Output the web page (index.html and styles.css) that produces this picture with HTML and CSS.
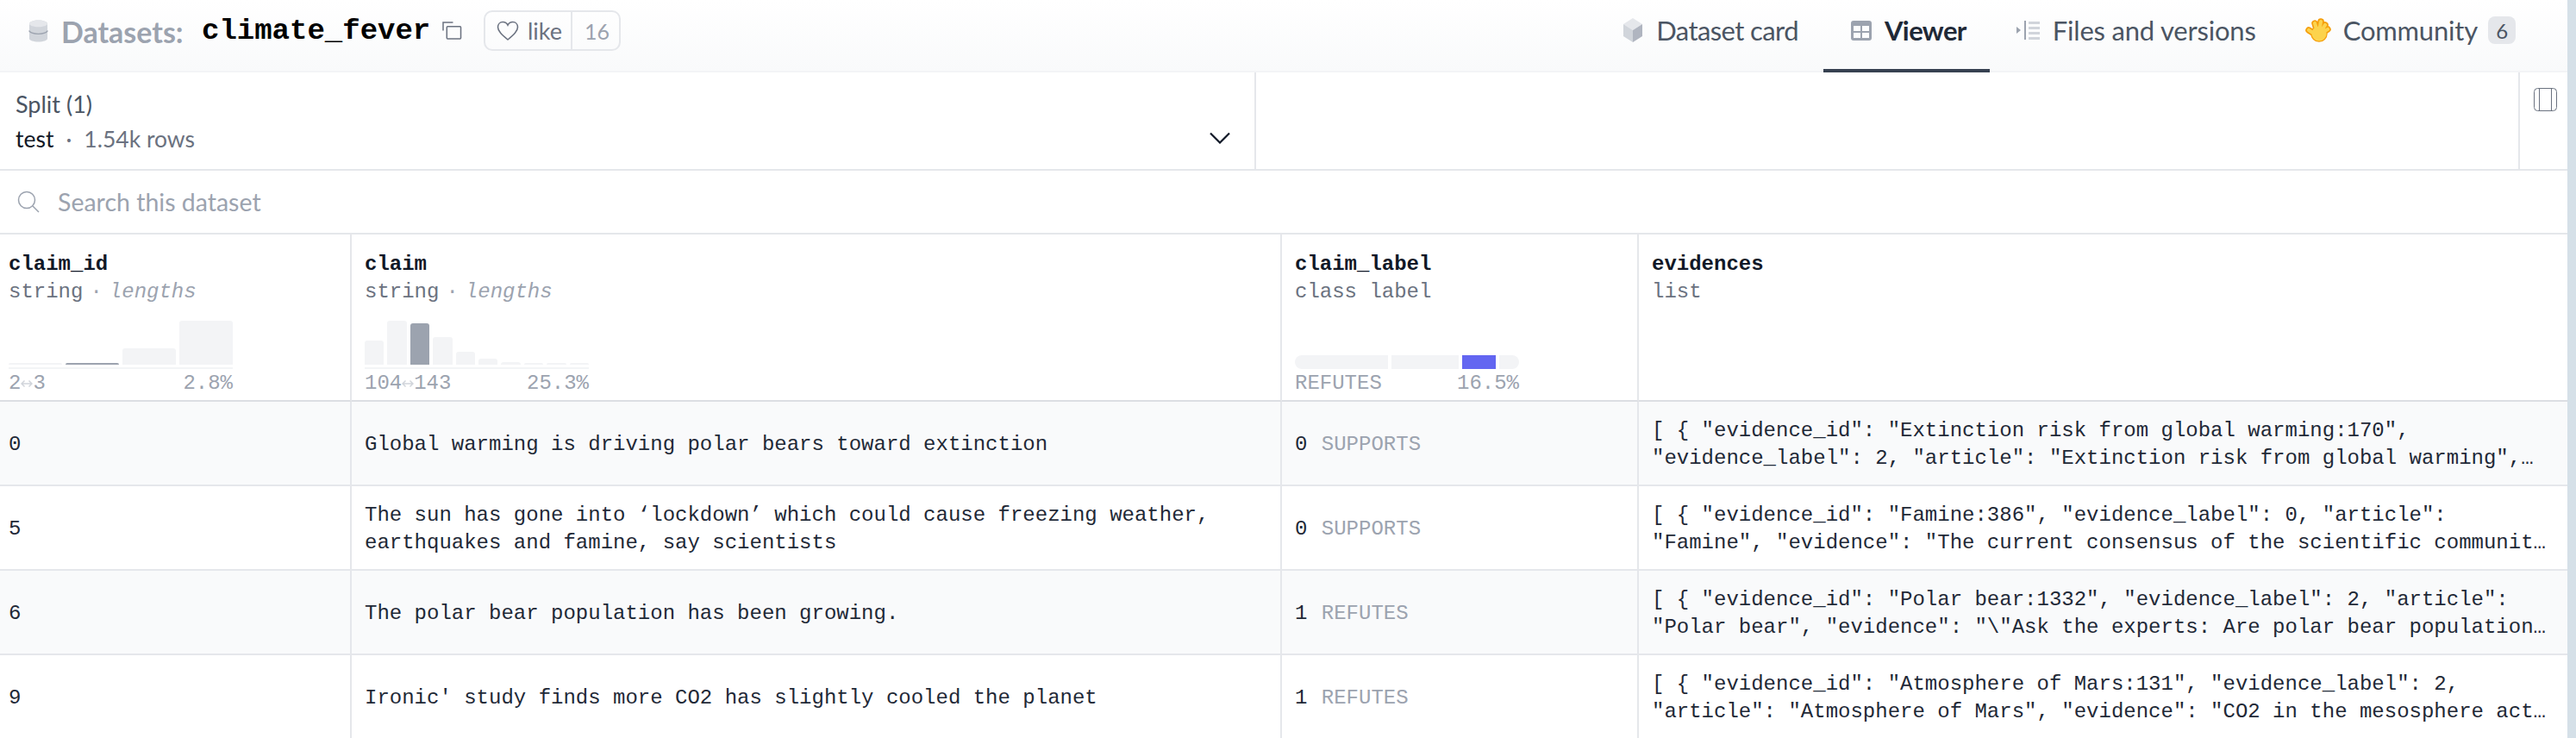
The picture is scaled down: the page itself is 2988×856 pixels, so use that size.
FILE: index.html
```html
<!DOCTYPE html>
<html lang="en">
<head>
    <meta charset="UTF-8">
    <title>climate_fever</title>
    <link rel="stylesheet" href="styles.css">
</head>
<body>
<div class="page">
    <div class="main">
        <header class="top-bar">
            <div class="title">
                <svg class="db-icon" viewBox="0 0 24 26">
                    <path d="M1 4c0-2 5-4 11-4s11 2 11 4v18c0 2-5 4-11 4S1 24 1 22z" fill="#d1d5db"/>
                    <path d="M1 4c0 2 5 4 11 4s11-2 11-4-5-4-11-4S1 2 1 4z" fill="#e5e7eb"/>
                    <path d="M1 12.500c0 2 5 4 11 4s11-2 11-4" fill="none" stroke="#9ca3af" stroke-width="1.500"/>
                </svg>
                <span class="title-label">Datasets:</span>
                <span class="title-name">climate_fever</span>
                <svg class="copy-icon" viewBox="0 0 24 22" fill="none" stroke="#6b7280" stroke-width="1.6">
                    <rect x="5.5" y="6" width="17" height="15" rx="1"/>
                    <path d="M1 11V1h12"/>
                </svg>
                <div class="like-btn">
                    <span class="like-main">
                        <svg class="heart" viewBox="0 0 26 24" fill="none" stroke="#6b7280" stroke-width="1.6">
                            <path d="M13 22C6 16 1.500 12 1.500 7.500 1.500 4 4 1.500 7.200 1.500c2.400 0 4.600 1.300 5.800 3.700 1.200-2.400 3.400-3.700 5.800-3.700 3.200 0 5.700 2.500 5.700 6C24.500 12 20 16 13 22z"/>
                        </svg>
                        like
                    </span>
                    <span class="like-count">16</span>
                </div>
            </div>
            <nav class="tabs">
                <a class="tab tab-card">
                    <svg class="tab-icon" viewBox="0 0 24 28">
                        <path d="M12 0l11 7-11 7L1 7z" fill="#e5e7eb"/>
                        <path d="M1 7l11 7v14L1 21z" fill="#d1d5db"/>
                        <path d="M23 7l-11 7v14l11-7z" fill="#b0b5c0"/>
                    </svg>
                    Dataset card
                </a>
                <a class="tab tab-viewer">
                    <svg class="tab-icon" viewBox="0 0 24 23">
                        <path d="M3 0h18a3 3 0 0 1 3 3v17a3 3 0 0 1-3 3H3a3 3 0 0 1-3-3V3a3 3 0 0 1 3-3zM3 6v6h8V6zm10 0v6h8V6zM3 14v6h8v-6zm10 0v6h8v-6z" fill="#9ca3af" fill-rule="evenodd"/>
                    </svg>
                    Viewer
                </a>
                <a class="tab tab-files">
                    <svg class="tab-icon" viewBox="0 0 27 22">
                        <path d="M0 7l5 4-5 4z" fill="#9ca3af"/>
                        <rect x="9" y="0" width="2" height="22" fill="#9ca3af"/>
                        <rect x="14" y="1" width="13" height="3" fill="#d1d5db"/>
                        <rect x="14" y="7" width="13" height="3" fill="#d1d5db"/>
                        <rect x="14" y="13" width="13" height="3" fill="#d1d5db"/>
                        <rect x="14" y="19" width="13" height="3" fill="#d1d5db"/>
                    </svg>
                    Files and versions
                </a>
                <a class="tab tab-community">
                    <svg class="tab-icon hand" viewBox="0 0 32 28">
                        <g fill="#f59e0b" stroke="#f59e0b" stroke-width="7.500" stroke-linecap="round">
                            <circle cx="17" cy="18" r="6"/>
                            <path d="M15 16L12 6M17 16l2-12M19 16l5-8M20 17l7-4M13 19L5 14"/>
                        </g>
                        <g fill="#fcd34d" stroke="#fcd34d" stroke-width="4.200" stroke-linecap="round">
                            <circle cx="17" cy="18" r="6.500"/>
                            <path d="M15 16L12 6M17 16l2-12M19 16l5-8M20 17l7-4M13 19L5 14"/>
                        </g>
                    </svg>
                    Community
                    <span class="tab-badge">6</span>
                </a>
            </nav>
        </header>

        <div class="split-row">
            <div class="split-select">
                <div class="split-text">
                    <div class="split-title">Split (1)</div>
                    <div class="split-value"><span class="split-name">test</span><span class="split-dot">·</span>1.54k rows</div>
                </div>
                <svg class="chevron" viewBox="0 0 24 14" fill="none" stroke="#111827" stroke-width="2.200">
                    <path d="M1 1.500l11 11 11-11"/>
                </svg>
            </div>
            <div class="split-empty"></div>
            <div class="panel-toggle">
                <svg class="panel-icon" viewBox="0 0 27 27" fill="none" stroke="#6b7280" stroke-width="1">
                    <rect x=".5" y=".5" width="26" height="26" rx="4"/>
                    <path d="M6.500 .5v26M20.500 .5v26"/>
                </svg>
            </div>
        </div>

        <div class="search-row">
            <svg class="search-icon" viewBox="0 0 26 26" fill="none" stroke="#9ca3af" stroke-width="1.500">
                <circle cx="11" cy="11" r="9.500"/>
                <path d="M18 18l7 7"/>
            </svg>
            <span class="search-text">Search this dataset</span>
        </div>

        <table class="data-table">
            <colgroup>
                <col class="col-id">
                <col class="col-claim">
                <col class="col-label">
                <col class="col-evidence">
            </colgroup>
            <thead>
                <tr>
                    <th>
                        <div class="head-cell">
                            <div class="col-name">claim_id</div>
                            <div class="col-type">string<span class="type-dot">·</span><i>lengths</i></div>
                            <div class="hist">
                                <div class="bars">
                                    <span class="bar" style="height: 2px"></span>
                                    <span class="bar bar-on" style="height: 2px"></span>
                                    <span class="bar" style="height: 19px"></span>
                                    <span class="bar" style="height: 51px"></span>
                                </div>
                                <div class="stat">
                                    <span class="range">2<svg class="arrow" viewBox="0 0 14 10"><path d="M1 5h12M4.500 1.500L1 5l3.500 3.500M9.500 1.500L13 5 9.500 8.500"/></svg>3</span>
                                    <span>2.8%</span>
                                </div>
                            </div>
                        </div>
                    </th>
                    <th>
                        <div class="head-cell">
                            <div class="col-name">claim</div>
                            <div class="col-type">string<span class="type-dot">·</span><i>lengths</i></div>
                            <div class="hist">
                                <div class="bars">
                                    <span class="bar" style="height: 28px"></span>
                                    <span class="bar" style="height: 51px"></span>
                                    <span class="bar bar-on" style="height: 48px"></span>
                                    <span class="bar" style="height: 32px"></span>
                                    <span class="bar" style="height: 15px"></span>
                                    <span class="bar" style="height: 7px"></span>
                                    <span class="bar" style="height: 3px"></span>
                                    <span class="bar" style="height: 2px"></span>
                                    <span class="bar" style="height: 2px"></span>
                                    <span class="bar" style="height: 2px"></span>
                                </div>
                                <div class="stat">
                                    <span class="range">104<svg class="arrow" viewBox="0 0 14 10"><path d="M1 5h12M4.500 1.500L1 5l3.500 3.500M9.500 1.500L13 5 9.500 8.500"/></svg>143</span>
                                    <span>25.3%</span>
                                </div>
                            </div>
                        </div>
                    </th>
                    <th>
                        <div class="head-cell">
                            <div class="col-name">claim_label</div>
                            <div class="col-type">class label</div>
                            <div class="hist">
                                <div class="segments">
                                    <span class="seg seg-a"></span>
                                    <span class="seg seg-b"></span>
                                    <span class="seg seg-c"></span>
                                    <span class="seg seg-d"></span>
                                </div>
                                <div class="stat"><span>REFUTES</span><span>16.5%</span></div>
                            </div>
                        </div>
                    </th>
                    <th>
                        <div class="head-cell">
                            <div class="col-name">evidences</div>
                            <div class="col-type">list</div>
                        </div>
                    </th>
                </tr>
            </thead>
            <tbody>
                <tr>
                    <td>0</td>
                    <td>Global warming is driving polar bears toward extinction</td>
                    <td>0 <span class="label-name">SUPPORTS</span></td>
                    <td><div class="clamp">[ { "evidence_id": "Extinction risk from global warming:170", "evidence_label": 2, "article": "Extinction risk from global warming", "evidence": "Recent research" } ]</div></td>
                </tr>
                <tr>
                    <td>5</td>
                    <td>The sun has gone into ‘lockdown’ which could cause freezing weather, earthquakes and famine, say scientists</td>
                    <td>0 <span class="label-name">SUPPORTS</span></td>
                    <td><div class="clamp">[ { "evidence_id": "Famine:386", "evidence_label": 0, "article": "Famine", "evidence": "The current consensus of the scientific community is settled." } ]</div></td>
                </tr>
                <tr>
                    <td>6</td>
                    <td>The polar bear population has been growing.</td>
                    <td>1 <span class="label-name">REFUTES</span></td>
                    <td><div class="clamp">[ { "evidence_id": "Polar bear:1332", "evidence_label": 2, "article": "Polar bear", "evidence": "\"Ask the experts: Are polar bear populations increasing?\"" } ]</div></td>
                </tr>
                <tr>
                    <td>9</td>
                    <td>Ironic' study finds more CO2 has slightly cooled the planet</td>
                    <td>1 <span class="label-name">REFUTES</span></td>
                    <td><div class="clamp">[ { "evidence_id": "Atmosphere of Mars:131", "evidence_label": 2, "article": "Atmosphere of Mars", "evidence": "CO2 in the mesosphere acts as a cooling agent." } ]</div></td>
                </tr>
            </tbody>
        </table>
    </div>
    <div class="edge-strip"></div>
</div>
</body>
</html>
```

FILE: styles.css
```css
* {
    box-sizing: border-box;
}

html, body {
    margin: 0;
    height: 100%;
    overflow: hidden;
    background: white;
}

body {
    font-family: Lato, "Noto Sans", sans-serif;
    color: #111827;
}

.page {
    display: flex;
    height: 856px;
    overflow: hidden;
}

.main {
    flex: 1;
    min-width: 0;
}

.edge-strip {
    width: 10px;
    background: #d5e0e8;
}

/* top bar */
.top-bar {
    display: flex;
    justify-content: space-between;
    height: 84px;
    background: linear-gradient(to bottom, #ffffff, #f9fafb);
    border-bottom: 2px solid #f3f4f6;
}

.title {
    display: flex;
    align-items: center;
    padding-left: 33px;
    height: 72px;
}

.db-icon {
    width: 23px;
    height: 26px;
    margin-right: 15px;
}

.title-label {
    font-size: 34px;
    font-weight: 700;
    color: #9ca3af;
    width: 163px;
}

.title-name {
    font-family: "Liberation Mono", monospace;
    font-size: 34px;
    font-weight: 700;
    color: #000;
    width: 279px;
}

.copy-icon {
    width: 23px;
    height: 21px;
    margin-top: -2px;
    margin-right: 25px;
}

.like-btn {
    display: flex;
    height: 47px;
    margin-top: -1px;
    border: 2px solid #e5e7eb;
    border-radius: 10px;
    font-size: 27px;
    color: #6b7280;
}

.like-main {
    display: flex;
    align-items: center;
    width: 101px;
    padding-left: 13px;
    border-right: 2px solid #e5e7eb;
}

.heart {
    width: 26px;
    height: 24px;
    margin-right: 10px;
}

.like-count {
    display: flex;
    align-items: center;
    padding-left: 14px;
    width: 54px;
    font-size: 25px;
    color: #9ca3af;
}

.tabs {
    display: flex;
    padding-right: 60px;
}

.tab {
    display: flex;
    align-items: center;
    height: 84px;
    padding-bottom: 14px;
    font-size: 31px;
    letter-spacing: -0.2px;
    white-space: nowrap;
    color: #4b5563;
}

.tab-icon {
    display: block;
    margin-right: 15px;
}

.tab-card {
    letter-spacing: -0.6px;
}

.tab-card .tab-icon {
    width: 24px;
    height: 28px;
}

.tab-viewer {
    margin-left: 29px;
    padding: 0 27px 10px 32px;
    border-bottom: 4px solid #374151;
    font-weight: 700;
    letter-spacing: -0.6px;
    color: #1f2937;
}

.tab-viewer .tab-icon {
    width: 24px;
    height: 23px;
}

.tab-files {
    margin-left: 31px;
}

.tab-files .tab-icon {
    width: 27px;
    height: 22px;
}

.tab-community {
    margin-left: 56px;
}

.tab-community .hand {
    width: 32px;
    height: 28px;
    margin-right: 13px;
}

.tab-badge {
    display: flex;
    align-items: center;
    justify-content: center;
    width: 32px;
    height: 32px;
    margin-left: 12px;
    border-radius: 8px;
    background: #e5e7eb;
    font-size: 24px;
    color: #4b5563;
}

/* split selector */
.split-row {
    display: flex;
    height: 114px;
    border-bottom: 2px solid #e5e7eb;
}

.split-select {
    display: flex;
    align-items: center;
    justify-content: space-between;
    width: 1457px;
    padding: 0 28px 0 18px;
    border-right: 2px solid #e5e7eb;
}

.split-text {
    margin-top: 2px;
}

.split-title {
    font-size: 27px;
    line-height: 40px;
    color: #4b5563;
}

.split-value {
    font-size: 26.5px;
    line-height: 40px;
    color: #6b7280;
}

.split-name {
    color: #111827;
}

.split-dot {
    margin: 0 14px;
}

.chevron {
    width: 24px;
    height: 14px;
    margin-top: 40px;
}

.split-empty {
    flex: 1;
}

.panel-toggle {
    width: 57px;
    padding: 18px 0 0 16px;
    border-left: 2px solid #e5e7eb;
}

.panel-icon {
    display: block;
    width: 27px;
    height: 27px;
}

/* search */
.search-row {
    display: flex;
    align-items: center;
    height: 74px;
    padding-left: 20px;
    border-bottom: 2px solid #e5e7eb;
}

.search-icon {
    width: 26px;
    height: 26px;
    margin-right: 21px;
}

.search-text {
    font-size: 28.5px;
    color: #9ca3af;
}

/* table */
.data-table {
    width: 100%;
    table-layout: fixed;
    border-collapse: separate;
    border-spacing: 0;
    font-family: "Liberation Mono", monospace;
    font-size: 24px;
}

.col-id {
    width: 408px;
}

.col-claim {
    width: 1079px;
}

.col-label {
    width: 414px;
}

.data-table th {
    padding: 0;
    font-weight: 400;
    text-align: left;
    border-right: 2px solid #e5e7eb;
    border-bottom: 2px solid #dcdee3;
}

.data-table th:first-child .head-cell {
    padding-left: 10px;
}

.data-table th:last-child,
.data-table td:last-child {
    border-right: 0;
}

.head-cell {
    display: flex;
    flex-direction: column;
    height: 192px;
    padding: 19px 14px 0 15px;
}

.col-name {
    font-weight: 700;
    line-height: 32px;
    color: #111827;
}

.col-type {
    line-height: 32px;
    color: #6b7280;
}

.col-type i {
    color: #9ca3af;
}

.type-dot {
    margin: 0 8px;
    color: #9ca3af;
}

.hist {
    width: 260px;
    margin-top: auto;
    padding-bottom: 3px;
}

.bars {
    display: flex;
    align-items: flex-end;
    gap: 4px;
    height: 56px;
    border-bottom: 2px solid #f3f4f6;
    padding-bottom: 3px;
}

.bar {
    flex: 1;
    background: #f3f4f6;
    border-radius: 3px 3px 0 0;
}

.bar-on {
    background: #9ca3af;
}

.segments {
    display: flex;
    gap: 4px;
    height: 16px;
    border-radius: 8px;
    overflow: hidden;
}

.seg {
    background: #f3f4f6;
}

.seg-a {
    width: 108px;
}

.seg-b {
    width: 78px;
}

.seg-c {
    width: 39px;
    background: #6366f1;
}

.seg-d {
    flex: 1;
}

.stat {
    display: flex;
    justify-content: space-between;
    margin-top: 1px;
    line-height: 32px;
    color: #9ca3af;
}

.range {
    display: flex;
    align-items: center;
}

.arrow {
    width: 14px;
    height: 10px;
    fill: none;
    stroke: #d1d5db;
    stroke-width: 1.5;
}

.data-table td {
    height: 98px;
    padding: 3px 14px 0 15px;
    line-height: 32px;
    color: #1f2937;
    border-right: 2px solid #e5e7eb;
    border-bottom: 2px solid #e5e7eb;
    vertical-align: middle;
}

.data-table td:first-child {
    padding-left: 10px;
}

.data-table tbody tr:nth-child(odd) td {
    background: #f9fafb;
}

.label-name {
    margin-left: 2px;
    color: #9ca3af;
}

.clamp {
    display: -webkit-box;
    -webkit-box-orient: vertical;
    -webkit-line-clamp: 2;
    overflow: hidden;
    width: 1040px;
}
```
